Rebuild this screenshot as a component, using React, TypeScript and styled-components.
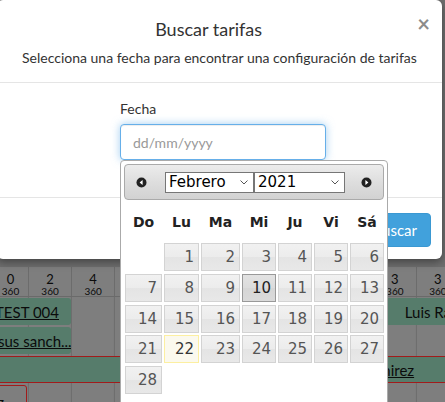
import React from 'react'
import styled, { createGlobalStyle, css } from 'styled-components'

const GlobalStyle = createGlobalStyle`
  html, body {
    margin: 0;
    padding: 0;
    background: #6e6e6e;
  }
  body {
    font-family: Lato, "Open Sans", sans-serif;
  }
`

const Stage = styled.div`
  position: relative;
  width: 445px;
  height: 402px;
  overflow: hidden;
  background: #6e6e6e;
`

/* ---------- scheduler behind the dimmed backdrop ---------- */

const Scheduler = styled.div`
  display: flex;
  flex-direction: column;
  color: #0b0b0b;
  font-family: Lato, sans-serif;
`

const Toolbar = styled.div`
  height: 267px;
  background: #6e6e6e;
`

const COLUMNS = '36px repeat(10, 43.1px)'

const HeaderRow = styled.div`
  display: grid;
  grid-template-columns: ${COLUMNS};
  margin-left: -7px;
  height: 29px;
  background: #7e7e7e;
  border-bottom: 1px solid #6a6a6a;
`

const HeadCell = styled.div`
  display: flex;
  flex-direction: column;
  align-items: center;
  padding-top: 5px;
  border-right: 1px solid #6c6c6c;
`

const HeadCount = styled.span`
  font-size: 13px;
  line-height: 14px;
`

const HeadCapacity = styled.span`
  font-size: 10px;
  line-height: 10px;
`

const Lane = styled.div`
  display: grid;
  grid-template-columns: ${COLUMNS};
  margin-left: -7px;
  height: 29px;
  background-color: #7e7e7e;
  background-image: repeating-linear-gradient(
    to right,
    transparent 0 42.1px,
    #6c6c6c 42.1px 43.1px
  );
  background-position: -7.1px 0;
`

const Booking = styled.div<{ $from: number; $to: number; $alert?: boolean; $pending?: boolean }>`
  grid-row: 1;
  grid-column: ${p => p.$from} / ${p => p.$to};
  display: flex;
  align-items: center;
  margin: 1px 1.5px 1px 0;
  min-width: 0;
  overflow: hidden;
  background: #567c6b;
  border-radius: 3px;
  font-size: 15px;
  white-space: nowrap;
  ${p =>
    p.$alert &&
    css`
      margin-right: 0;
      border-radius: 0;
      border-top: 1px solid #a11b1b;
      border-bottom: 1px solid #a11b1b;
    `}
  ${p =>
    p.$pending &&
    css`
      margin-right: 2px;
      background: #7e7e7e;
      border: 1px solid #a11b1b;
      align-items: flex-end;
    `}
`

const BookingName = styled.span<{ $pad: number; $link?: boolean }>`
  margin-left: ${p => p.$pad}px;
  text-decoration: ${p => (p.$link ? 'underline' : 'none')};
`

// only the columns that are not under the popup carry a count
const headCounts = ['0', '2', '4', '', '', '', '', '', '', '3', '3']

/* ---------- modal ---------- */

const Modal = styled.div`
  position: absolute;
  left: -3px;
  top: 0;
  width: 445px;
  background: #fff;
  border-radius: 6px;
  box-shadow: 0 3px 9px rgba(0, 0, 0, 0.4);
  color: #333;
  font-family: Lato, "Open Sans", sans-serif;
`

const ModalHeader = styled.div`
  padding: 18px 12px 14px 25px;
  border-bottom: 1px solid #e5e5e5;
`

const TitleRow = styled.div`
  display: flex;
  align-items: flex-start;
`

const Title = styled.h4`
  flex: 1;
  margin: 0;
  font-size: 18px;
  line-height: 22px;
  font-weight: 400;
  text-align: center;
`

const CloseButton = styled.button`
  margin: -5px 0 0 22px;
  padding: 0;
  border: 0;
  background: none;
  font-family: Lato, sans-serif;
  font-size: 22px;
  line-height: 22px;
  font-weight: 700;
  color: #000;
  opacity: 0.45;
  cursor: pointer;
`

const Subtitle = styled.p`
  margin: 8px 0 0;
  font-size: 14px;
  line-height: 20px;
`

const ModalBody = styled.div`
  padding: 16px 0 37px 123px;
`

const Label = styled.label`
  display: block;
  margin-bottom: 5px;
  font-size: 14px;
  line-height: 20px;
`

const DateInput = styled.input`
  box-sizing: border-box;
  width: 206px;
  height: 36px;
  padding: 0 12px;
  border: 1px solid #66afe9;
  border-radius: 4px;
  outline: none;
  font-family: Lato, sans-serif;
  font-size: 14px;
  color: #555;
  caret-color: #333;
  box-shadow: inset 0 1px 1px rgba(0, 0, 0, 0.075), 0 0 8px rgba(102, 175, 233, 0.6);

  &::placeholder {
    color: #999;
  }
`

const ModalFooter = styled.div`
  display: flex;
  justify-content: flex-end;
  padding: 15px 11px 12px;
  border-top: 1px solid #e5e5e5;
`

const PrimaryButton = styled.button`
  height: 34px;
  padding: 0 13px;
  border: 1px solid #3a98d2;
  border-radius: 4px;
  background: #41a1dc;
  color: #fff;
  font-family: Lato, sans-serif;
  font-size: 15px;
`

/* ---------- datepicker popup ---------- */

const Picker = styled.div`
  position: absolute;
  left: 120px;
  top: 160px;
  box-sizing: border-box;
  width: 268px;
  padding: 3px 3px 14px;
  border: 1px solid #aaa;
  border-radius: 4px;
  background: #fff;
  font-family: "DejaVu Sans", Verdana, sans-serif;
  z-index: 2;
`

const PickerHeader = styled.div`
  box-sizing: border-box;
  display: flex;
  align-items: center;
  height: 36px;
  border: 1px solid #aaa;
  border-radius: 4px;
  background: linear-gradient(to bottom, #ececec 0%, #dedede 50%, #d2d2d2 100%);
`

const NavButton = styled.span<{ $gap: number }>`
  display: flex;
  align-items: center;
  justify-content: center;
  width: 32px;
  margin-left: ${p => p.$gap}px;
`

const Selects = styled.div`
  display: flex;
  margin-left: 8px;
`

const SelectWrap = styled.span`
  position: relative;
  display: inline-flex;
`

const Select = styled.select<{ $w: number }>`
  box-sizing: border-box;
  width: ${p => p.$w}px;
  height: 21px;
  padding: 0 0 0 3px;
  border: 1px solid #767676;
  border-radius: 0;
  background: #fff;
  color: #000;
  font-family: "DejaVu Sans", Verdana, sans-serif;
  font-size: 15px;
  appearance: none;
  -webkit-appearance: none;
`

const Chevron = styled.svg`
  position: absolute;
  right: 6px;
  top: 8px;
  pointer-events: none;
`

const WEEK_COLUMNS = '37px 35px 39px 34px 34px 34px 34px'

const DayNames = styled.div`
  display: grid;
  grid-template-columns: ${WEEK_COLUMNS};
  column-gap: 2px;
  height: 43px;
  margin-left: 1px;
  align-items: center;
  font-size: 14px;
  font-weight: 700;
  color: #222;
  text-align: center;
`

const DaysGrid = styled.div`
  display: grid;
  grid-template-columns: ${WEEK_COLUMNS};
  grid-auto-rows: 28px;
  column-gap: 2px;
  row-gap: 2.75px;
  margin-left: 1px;
`

type DayState = 'default' | 'active' | 'today'

const dayLooks = {
  default: css`
    border-color: #d3d3d3;
    background: linear-gradient(to bottom, #f1f1f1 0%, #ececec 50%, #e4e4e4 52%, #e8e8e8 100%);
    color: #555;
  `,
  active: css`
    border-color: #999;
    background: linear-gradient(to bottom, #e2e2e2 0%, #dcdcdc 50%, #d6d6d6 52%, #dadada 100%);
    color: #212121;
  `,
  today: css`
    border-color: #fcefa1;
    background: #fbf9ee;
    color: #363636;
  `,
}

const Day = styled.a<{ $state: DayState; $start?: number }>`
  box-sizing: border-box;
  display: block;
  ${p => p.$start && `grid-column-start: ${p.$start};`}
  padding-right: 4px;
  border: 1px solid;
  font-size: 15px;
  line-height: 26px;
  text-align: right;
  text-decoration: none;
  ${p => dayLooks[p.$state]}
`

const NavIcon = ({ dir }: { dir: 'prev' | 'next' }) => (
  <svg width="11" height="11" viewBox="0 0 11 11">
    <circle cx="5.5" cy="5.5" r="5" fill="#222" />
    {dir === 'prev' ? (
      <polygon points="6.6,3 3.6,5.5 6.6,8" fill="#fff" />
    ) : (
      <polygon points="4.4,3 7.4,5.5 4.4,8" fill="#fff" />
    )}
  </svg>
)

const SelectArrow = () => (
  <Chevron width="8" height="5" viewBox="0 0 8 5">
    <path d="M0.5 0.5 L4 4 L7.5 0.5" fill="none" stroke="#555" strokeWidth="1" />
  </Chevron>
)

const months = [
  'Enero', 'Febrero', 'Marzo', 'Abril', 'Mayo', 'Junio',
  'Julio', 'Agosto', 'Septiembre', 'Octubre', 'Noviembre', 'Diciembre',
]
const years = Array.from({ length: 21 }, (_, i) => 2011 + i)
const weekDays = ['Do', 'Lu', 'Ma', 'Mi', 'Ju', 'Vi', 'Sá']
const days = Array.from({ length: 28 }, (_, i) => i + 1)

const dayState = (d: number): DayState => (d === 10 ? 'active' : d === 22 ? 'today' : 'default')

export default function App() {
  return (
    <Stage>
      <GlobalStyle />

      <Scheduler>
        <Toolbar />
        <HeaderRow>
          {headCounts.map((n, i) => (
            <HeadCell key={i}>
              {n && (
                <>
                  <HeadCount>{n}</HeadCount>
                  <HeadCapacity>360</HeadCapacity>
                </>
              )}
            </HeadCell>
          ))}
        </HeaderRow>
        <Lane>
          <Booking $from={1} $to={3}>
            <BookingName $pad={2} $link>TEST 004</BookingName>
          </Booking>
          <Booking $from={10} $to={-1}>
            <BookingName $pad={31}>Luis Ramírez</BookingName>
          </Booking>
        </Lane>
        <Lane>
          <Booking $from={1} $to={3}>
            <BookingName $pad={-9} $link>Jesus sanch...</BookingName>
          </Booking>
        </Lane>
        <Lane>
          <Booking $from={1} $to={-1} $alert>
            <BookingName $pad={339} $link>Luis Ramirez</BookingName>
          </Booking>
        </Lane>
        <Lane>
          <Booking $from={1} $to={2} $pending>
            <BookingName $pad={-19}>Díaz</BookingName>
          </Booking>
        </Lane>
      </Scheduler>

      <Modal>
        <ModalHeader>
          <TitleRow>
            <Title>Buscar tarifas</Title>
            <CloseButton>×</CloseButton>
          </TitleRow>
          <Subtitle>Selecciona una fecha para encontrar una configuración de tarifas</Subtitle>
        </ModalHeader>
        <ModalBody>
          <Label htmlFor="fecha">Fecha</Label>
          <DateInput id="fecha" placeholder="dd/mm/yyyy" autoFocus />
        </ModalBody>
        <ModalFooter>
          <PrimaryButton>Buscar</PrimaryButton>
        </ModalFooter>
      </Modal>

      <Picker>
        <PickerHeader>
          <NavButton $gap={0}>
            <NavIcon dir="prev" />
          </NavButton>
          <Selects>
            <SelectWrap>
              <Select $w={89} defaultValue="1">
                {months.map((m, i) => (
                  <option key={m} value={i}>
                    {m}
                  </option>
                ))}
              </Select>
              <SelectArrow />
            </SelectWrap>
            <SelectWrap>
              <Select $w={91} defaultValue="2021">
                {years.map(y => (
                  <option key={y} value={y}>
                    {y}
                  </option>
                ))}
              </Select>
              <SelectArrow />
            </SelectWrap>
          </Selects>
          <NavButton $gap={5}>
            <NavIcon dir="next" />
          </NavButton>
        </PickerHeader>
        <DayNames>
          {weekDays.map(d => (
            <span key={d}>{d}</span>
          ))}
        </DayNames>
        <DaysGrid>
          {days.map(d => (
            <Day key={d} href="#" $state={dayState(d)} $start={d === 1 ? 2 : undefined}>
              {d}
            </Day>
          ))}
        </DaysGrid>
      </Picker>
    </Stage>
  )
}
